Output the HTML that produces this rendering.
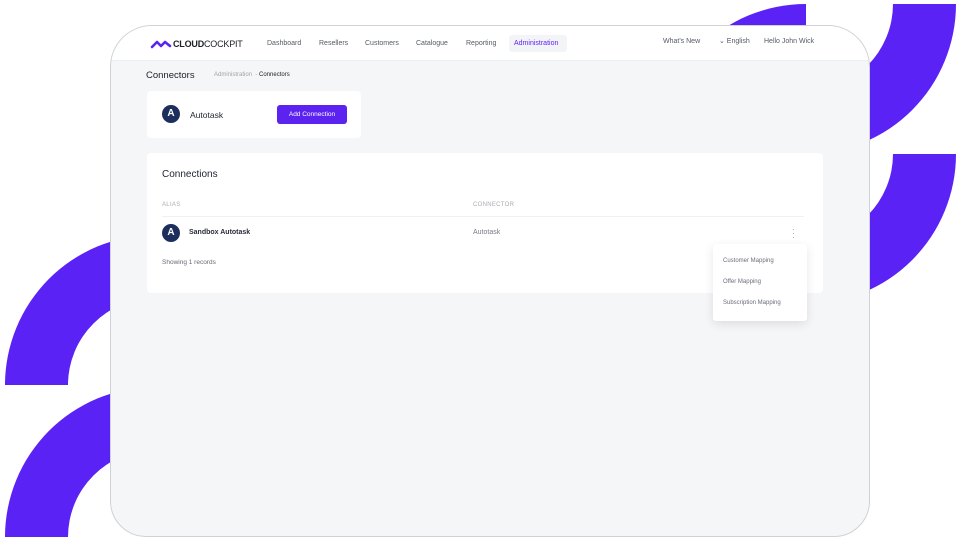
<!DOCTYPE html>
<html><head><meta charset="utf-8"><style>
*{margin:0;padding:0;box-sizing:border-box}
body{width:960px;height:540px;background:#fff;position:relative;overflow:hidden;font-family:"Liberation Sans",sans-serif;color:#1f2330}
.a{position:absolute}
.card{left:110px;top:25px;width:760px;height:512px;border-radius:42px 42px 36px 36px;background:#f5f6f8;border:1px solid #cfd1d6;overflow:hidden}
.hdr{left:0;top:0;width:100%;height:35px;background:#fff;border-bottom:1px solid #eceef1}
.nav{font-size:7px;color:#555a66;top:14px}
.w{background:#fff;border-radius:4px}
.av{width:18px;height:18px;border-radius:50%;background:#1c2f5c;color:#fff;font-size:10px;font-weight:bold;text-align:center;line-height:18px;overflow:hidden}
</style></head><body>
<svg class="a" style="left:0;top:0" width="960" height="540">
<g fill="#5b22f5">
<path d="M893 4 L956 4 A150 150 0 0 1 806 154 L806 91 A87 87 0 0 0 893 4Z"/>
<path d="M806 4 L806 66 A88 88 0 0 0 718 154 L656 154 A150 150 0 0 1 806 4Z"/>
<path d="M893 154 L956 154 A150 150 0 0 1 806 304 L806 241 A87 87 0 0 0 893 154Z"/>
<path d="M5 385 L68 385 A87 87 0 0 1 155 298 L155 235 A150 150 0 0 0 5 385Z"/>
<path d="M5 537 L68 537 A87 87 0 0 1 155 450 L155 387 A150 150 0 0 0 5 537Z"/>
</g></svg>
<div class="a card">
 <div class="a hdr">
  <svg class="a" style="left:39px;top:13px" width="22" height="10"><path d="M2 8 L7 3 L11 7 L15 3 L20 7" stroke="#5b22f5" stroke-width="2.6" fill="none" stroke-linecap="round" stroke-linejoin="round"/></svg>
  <div class="a" style="left:62px;top:13px;font-size:9px;letter-spacing:-0.2px;color:#1d1f2a"><b>CLOUD</b>COCKPIT</div>
  <div class="a nav" style="left:156px;top:14px">Dashboard</div>
  <div class="a nav" style="left:208px;top:14px">Resellers</div>
  <div class="a nav" style="left:254px;top:14px">Customers</div>
  <div class="a nav" style="left:305px;top:14px">Catalogue</div>
  <div class="a nav" style="left:355px;top:14px">Reporting</div>
  <div class="a" style="left:398px;top:9px;width:58px;height:17px;background:#f3f4f7;border-radius:3px"></div>
  <div class="a nav" style="left:403px;top:14px;color:#5b22f5">Administration</div>
  <div class="a nav" style="left:552px;top:12px">What's New</div>
  <div class="a nav" style="left:608px;top:11px">⌄ English</div>
  <div class="a nav" style="left:653px;top:12px">Hello John Wick</div>
 </div>
 <div class="a" style="left:35px;top:44px;font-size:9.5px;color:#1d1f2a">Connectors</div>
 <div class="a" style="left:103px;top:46px;font-size:6px;color:#a0a3ab">Administration &nbsp;- <span style="color:#222">Connectors</span></div>
 <div class="a w" style="left:36px;top:65px;width:214px;height:47px">
  <div class="a av" style="left:15px;top:14px">A</div>
  <div class="a" style="left:43px;top:19px;font-size:8.5px">Autotask</div>
  <div class="a" style="left:130px;top:14px;width:70px;height:19px;background:#5b22f0;border-radius:3px;color:#fff;font-size:6.5px;text-align:center;line-height:19px">Add Connection</div>
 </div>
 <div class="a w" style="left:36px;top:127px;width:676px;height:140px">
  <div class="a" style="left:15px;top:16px;font-size:10px">Connections</div>
  <div class="a" style="left:15px;top:49px;font-size:6px;color:#a9acb3;letter-spacing:.3px">ALIAS</div>
  <div class="a" style="left:326px;top:49px;font-size:6px;color:#a9acb3;letter-spacing:.3px">CONNECTOR</div>
  <div class="a" style="left:15px;top:63px;width:642px;height:1px;background:#eef0f2"></div>
  <div class="a av" style="left:15px;top:71px">A</div>
  <div class="a" style="left:42px;top:76px;font-size:7px;font-weight:bold;color:#2a2d38">Sandbox Autotask</div>
  <div class="a" style="left:326px;top:76px;font-size:7px;color:#777b88">Autotask</div>
  <div class="a" style="left:645px;top:75px;font-size:8px;color:#888;line-height:4px">·<br>·<br>·</div>
  <div class="a" style="left:15px;top:106px;font-size:6.5px;color:#666a75">Showing 1 records</div>
 </div>
 <div class="a" style="left:602px;top:218px;width:94px;height:77px;background:#fff;border-radius:3px;box-shadow:0 3px 10px rgba(0,0,0,.1)">
  <div class="a" style="left:10px;top:14px;font-size:6px;color:#6a6e7a">Customer Mapping</div>
  <div class="a" style="left:10px;top:35px;font-size:6px;color:#6a6e7a">Offer Mapping</div>
  <div class="a" style="left:10px;top:56px;font-size:6px;color:#6a6e7a">Subscription Mapping</div>
 </div>
</div>
</body></html>
